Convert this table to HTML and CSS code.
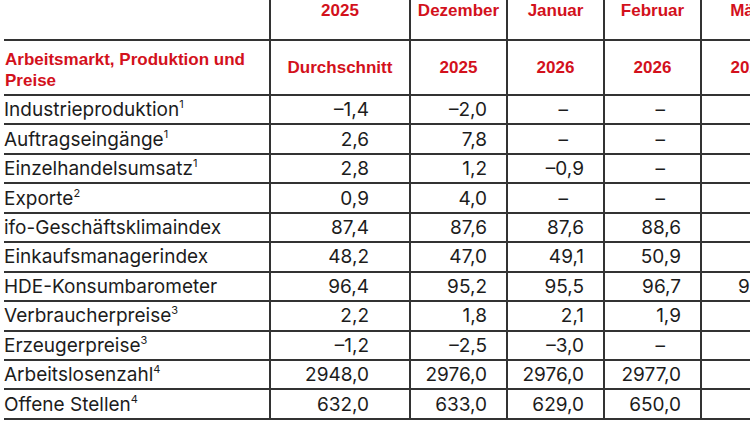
FILE: index.html
```html
<!DOCTYPE html>
<html lang="de">
<head>
<meta charset="utf-8">
<link rel="stylesheet" href="styles.css">
</head>
<body>
<table class="stats">
  <colgroup>
    <col class="c-label"><col class="c-avg"><col class="c-m"><col class="c-m"><col class="c-m"><col class="c-m">
  </colgroup>
  <thead>
    <tr class="h1">
      <th class="lab"></th><th>2025</th><th>Dezember</th><th>Januar</th><th>Februar</th><th>März</th>
    </tr>
    <tr class="h2">
      <th class="lab">Arbeitsmarkt, Produktion und<br>Preise</th><th>Durchschnitt</th><th>2025</th><th>2026</th><th>2026</th><th>2026</th>
    </tr>
  </thead>
  <tbody>
    <tr><td class="lab">Industrieproduktion<sup>1</sup></td><td>–1,4</td><td>–2,0</td><td class="dash">–</td><td class="dash">–</td><td class="dash">–</td></tr>
    <tr><td class="lab">Auftragseingänge<sup>1</sup></td><td>2,6</td><td>7,8</td><td class="dash">–</td><td class="dash">–</td><td class="dash">–</td></tr>
    <tr><td class="lab">Einzelhandelsumsatz<sup>1</sup></td><td>2,8</td><td>1,2</td><td>–0,9</td><td class="dash">–</td><td class="dash">–</td></tr>
    <tr><td class="lab">Exporte<sup>2</sup></td><td>0,9</td><td>4,0</td><td class="dash">–</td><td class="dash">–</td><td class="dash">–</td></tr>
    <tr><td class="lab">ifo-Geschäftsklimaindex</td><td>87,4</td><td>87,6</td><td>87,6</td><td>88,6</td><td class="dash">–</td></tr>
    <tr><td class="lab">Einkaufsmanagerindex</td><td>48,2</td><td>47,0</td><td>49,1</td><td>50,9</td><td class="dash">–</td></tr>
    <tr><td class="lab">HDE-Konsumbarometer</td><td>96,4</td><td>95,2</td><td>95,5</td><td>96,7</td><td>96,9</td></tr>
    <tr><td class="lab">Verbraucherpreise<sup>3</sup></td><td>2,2</td><td>1,8</td><td>2,1</td><td>1,9</td><td class="dash">–</td></tr>
    <tr><td class="lab">Erzeugerpreise<sup>3</sup></td><td>–1,2</td><td>–2,5</td><td>–3,0</td><td class="dash">–</td><td class="dash">–</td></tr>
    <tr><td class="lab">Arbeitslosenzahl<sup>4</sup></td><td>2948,0</td><td>2976,0</td><td>2976,0</td><td>2977,0</td><td class="dash">–</td></tr>
    <tr><td class="lab">Offene Stellen<sup>4</sup></td><td>632,0</td><td>633,0</td><td>629,0</td><td>650,0</td><td class="dash">–</td></tr>
  </tbody>
</table>
</body>
</html>
```

FILE: styles.css
```css
html, body {
  margin: 0;
  padding: 0;
  background: #ffffff;
  overflow: hidden;
}
body {
  width: 750px;
  height: 421px;
}
.stats {
  margin-left: 4px;
  border-collapse: collapse;
  table-layout: fixed;
  width: 793px;
  font-family: Inter, "Liberation Sans", sans-serif;
  color: #1c1c1c;
}
.c-label { width: 266px; }
.c-avg { width: 140px; }
.c-m { width: 97px; }

.stats th, .stats td {
  border: 2px solid #333333;
  padding: 0;
}
.stats tr > :first-child { border-left: none; }
.stats .h1 th { border-top: none; }

.stats th {
  color: #d3111c;
  font-family: "Liberation Sans", Arial, sans-serif;
  font-weight: 700;
  font-size: 17px;
  text-align: center;
  line-height: 20px;
}
.stats .h1 { height: 40px; }
.stats .h1 th { vertical-align: top; padding-top: 1px; }
.stats .h2 { height: 55px; }
.stats th.lab {
  text-align: left;
  padding-left: 1px;
  line-height: 21px;
  padding-top: 4px;
}

.stats tbody tr { height: 29.45px; }
.stats td {
  font-size: 19px;
  line-height: 23px;
  text-align: right;
  padding-right: 19px;
  padding-top: 0;
  white-space: nowrap;
}
.stats td:nth-child(2) { padding-right: 40px; }
.stats td.dash { padding-right: 35px; }
.stats td.lab {
  text-align: left;
  padding-left: 0;
  padding-right: 0;
}
.stats sup {
  font-size: 11px;
  line-height: 0;
  vertical-align: 8px;
}
```
